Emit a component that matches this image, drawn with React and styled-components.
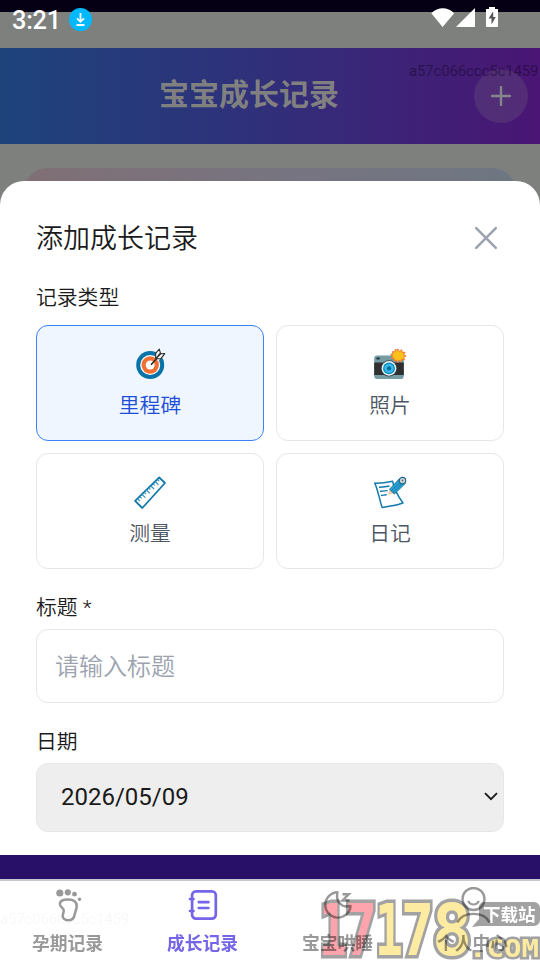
import React from "react";
import styled, { createGlobalStyle } from "styled-components";

const GlobalStyle = createGlobalStyle`
  * {
    box-sizing: border-box;
  }
  body {
    margin: 0;
    font-family: Roboto, "Noto Sans CJK SC", sans-serif;
    color: #1a1a1a;
  }
  button {
    font: inherit;
    color: inherit;
    border: none;
    background: none;
    padding: 0;
  }
`;

const Screen = styled.div`
  position: relative;
  width: 540px;
  height: 960px;
  overflow: hidden;
  display: flex;
  flex-direction: column;
  background: #7e807e;
`;

const TopStrip = styled.div`
  height: 12px;
  margin-bottom: 36px;
  background: #050014;
`;

const StatusBar = styled.div`
  position: absolute;
  top: 0;
  left: 0;
  width: 100%;
  height: 38px;
  padding: 0 42px 0 12px;
  display: flex;
  align-items: center;
  color: #fff;
  svg {
    display: block;
  }
`;

const Clock = styled.span`
  font-size: 25.4px;
  font-weight: 500;
  line-height: 38px;
  width: 57px;
  padding-top: 2px;
  letter-spacing: -0.3px;
`;

const StatusIcons = styled.div`
  margin-left: auto;
  margin-bottom: 3px;
`;

const Header = styled.header`
  position: relative;
  height: 96px;
  flex: none;
  display: flex;
  align-items: center;
  justify-content: flex-end;
  padding-right: 12px;
  background: linear-gradient(90deg, #1d437b 0%, #30307a 48%, #4a1574 100%);
`;

const PageTitle = styled.h1`
  flex: 1;
  margin: 0 0 2px;
  padding-left: 24px;
  text-align: center;
  font-size: 30px;
  line-height: 44px;
  font-weight: 700;
  color: #808080;
`;

const AddButton = styled.button`
  width: 54px;
  height: 54px;
  border-radius: 50%;
  display: grid;
  place-items: center;
  background: rgba(128, 128, 128, 0.2);
`;

const DeviceId = styled.span`
  position: absolute;
  top: ${({ top }) => top};
  left: ${({ left }) => left};
  font-size: 15px;
  line-height: 18px;
  letter-spacing: -0.15px;
  color: ${({ color }) => color};
`;

const PeekCard = styled.div`
  height: 60px;
  flex: none;
  margin: 24px 24px 0;
  border-radius: 24px;
  background: linear-gradient(90deg, #806f75, #777480 50%, #6e7682);
`;

const Sheet = styled.section`
  position: absolute;
  top: 181px;
  left: 0;
  width: 100%;
  height: 674px;
  padding: 36px 36px 0;
  border-radius: 24px 24px 0 0;
  background: #fff;
`;

const SheetHeader = styled.div`
  height: 42px;
  display: flex;
  align-items: center;
  justify-content: space-between;
  padding-right: 6px;
  margin-bottom: 23px;
  h2 {
    margin: 0;
    padding-top: 2px;
    font-size: 27px;
    line-height: 42px;
    font-weight: 350;
  }
  svg {
    display: block;
  }
`;

const Label = styled.div`
  font-size: 20.8px;
  font-weight: 350;
  line-height: 30px;
  padding-top: ${({ $shift }) => $shift || "2px"};
  height: 30px;
  margin-bottom: ${({ $gap }) => $gap || "8px"};
`;

const TypeGrid = styled.div`
  display: grid;
  grid-template-columns: 1fr 1fr;
  gap: 12px;
  margin-bottom: 22px;
`;

const TypeCard = styled.button`
  height: 116px;
  display: flex;
  flex-direction: column;
  align-items: center;
  padding-top: 22px;
  border-radius: 12px;
  border: 1px solid ${({ $active }) => ($active ? "#3b82f6" : "#e5e7eb")};
  background: ${({ $active }) => ($active ? "#eff6ff" : "#fff")};
  color: ${({ $active }) => ($active ? "#1d4ed8" : "#4b5563")};
  font-size: 20.8px;
  font-weight: 350;
  line-height: 30px;
  svg {
    display: block;
    margin-bottom: 11px;
    overflow: visible;
  }
`;

const TitleInput = styled.input`
  display: block;
  width: 100%;
  height: 74px;
  padding: 1px 18px 0;
  margin-bottom: 22px;
  border: 1px solid #e5e7eb;
  border-radius: 12px;
  font-family: inherit;
  font-size: 24px;
  font-weight: 350;
  &::placeholder {
    color: #9ca3af;
  }
`;

const DateField = styled.div`
  height: 69px;
  display: flex;
  align-items: center;
  justify-content: space-between;
  padding: 0 5px 2px 24px;
  border: 1px solid #e5e7eb;
  border-radius: 12px;
  background: #eee;
  font-size: 24px;
`;

const Footer = styled.footer`
  margin-top: auto;
  height: 105px;
  flex: none;
  padding-top: 24px;
  background: #280f68;
`;

const TabBar = styled.nav`
  position: relative;
  height: 81px;
  display: grid;
  grid-template-columns: repeat(4, 1fr);
  border-top: 2px solid #c9c7ce;
  background: #fff;
  isolation: isolate;
`;

const Tab = styled.button`
  display: flex;
  flex-direction: column;
  align-items: center;
  padding-top: 6px;
  font-size: 17.8px;
  line-height: 26px;
  font-weight: 700;
  color: ${({ $active }) => ($active ? "#7565e8" : "#999")};
  svg {
    display: block;
    margin-bottom: 8px;
  }
`;

const SiteMark = styled.div`
  position: absolute;
  left: 316px;
  top: 0;
  width: 224px;
  height: 79px;
  mix-blend-mode: multiply;
  svg {
    display: block;
  }
`;

const DownloadIcon = () => (
  <svg width="23" height="23" viewBox="0 0 23 23">
    <circle cx="11.5" cy="11.5" r="11.5" fill="#00b8fd" />
    <path d="M11.5 5v8M8 10.3l3.5 3.5 3.5-3.5M7.5 17h8" fill="none" stroke="#fff" strokeWidth="1.8" />
  </svg>
);

const SignalIcons = () => (
  <svg width="68" height="22" viewBox="0 0 68 22" fill="#fff">
    <path d="M1.3 6.2C8-.4 17.5-.4 24.2 6.2L12.6 20z" />
    <path d="M45 1v19H26z" />
    <path d="M56 2h3V0h6v2h3v17.2a.8.8 0 0 1-.8.8H56.8a.8.8 0 0 1-.8-.8z" />
    <path d="M63.2 4.2L58.6 11.5h2.9v6l4.3-7.6h-2.6z" fill="#555" />
  </svg>
);

const PlusIcon = () => (
  <svg width="20" height="20" viewBox="0 0 20 20">
    <path d="M10 1v18M1 10h18" stroke="#86858a" strokeWidth="2.4" strokeLinecap="round" />
  </svg>
);

const CloseIcon = () => (
  <svg width="24" height="24" viewBox="0 0 24 24">
    <path d="M2.2 2.2l19.6 19.6M21.8 2.2L2.2 21.8" stroke="#9ca3af" strokeWidth="2.6" strokeLinecap="round" />
  </svg>
);

const TargetIcon = () => (
  <svg width="32" height="32" viewBox="0 0 32 32">
    <circle cx="16.2" cy="17" r="14" fill="#0873a8" />
    <circle cx="16.2" cy="17" r="10" fill="#fff" />
    <circle cx="16.2" cy="17" r="8.7" fill="#f06f32" />
    <circle cx="16.2" cy="17" r="4.5" fill="#fff" />
    <path d="M21 9.5L26.5 4l3 4-5.2 5z" fill="#eff6ff" />
    <path d="M17 16.8L27.5 5.2" stroke="#252525" strokeWidth="1.5" />
    <path
      d="M21.6 10.7l.2-5.5 3.5-4 1.1 3.7-4.5 5.8M22.5 10.8l4.3-.2 4-5-3.8.1-5 5"
      fill="#fff"
      stroke="#303030"
      strokeWidth="1.1"
      strokeLinejoin="round"
    />
  </svg>
);

const CameraIcon = () => (
  <svg width="32" height="32" viewBox="0 0 32 32">
    <rect x="17" y="5" width="11" height="8" rx="2" fill="#7fa1a8" />
    <rect x="0.2" y="7.5" width="29.6" height="23.5" rx="3" fill="#759ba3" />
    <rect x="0.2" y="14.5" width="29.6" height="12.5" fill="#303030" />
    <rect x="2.3" y="9.6" width="3.6" height="2" rx="1" fill="#263238" />
    <circle cx="15" cy="20.4" r="8.1" fill="#37474f" />
    <circle cx="15" cy="20.4" r="7.3" fill="#f0f4f5" />
    <circle cx="15" cy="20.4" r="5.9" fill="#0288b8" />
    <circle cx="15" cy="20.4" r="4.7" fill="#39b8ea" />
    <circle cx="15" cy="20.4" r="2.1" fill="#01689b" />
    <path
      d="M23.9.9l1.5 2.6 2.4-1.8.3 2.8 3-.3-1.4 2.6 2.4 1.2-2.5 1.2.9 2.4-2.8-.3-.3 2.6-2.2-1.6-1.5 2.3-1.2-2.6-2.4 1.2.1-2.8-2.6.1 1.2-2.4-2.1-1.5 2.5-.8-.8-2.2 2.6.3.3-2.8 2 1.6z"
      fill="#fcc21b"
      stroke="#f37a35"
      strokeWidth="1"
    />
  </svg>
);

const RulerIcon = () => (
  <svg width="32" height="32" viewBox="0 0 32 32">
    <path
      d="M25.2 1.5L31 7 8.3 32 1.1 24.8z"
      fill="#fff"
      stroke="#1279ad"
      strokeWidth="1.8"
      strokeLinejoin="round"
    />
    <path
      d="M3.5 22.7l2.5 2.4M5.7 20.5l1.9 1.9M7.9 18.3l3.4 3.3M10.1 16.2l1.9 1.9M12.3 14l3.4 3.3M14.5 11.8l1.9 1.9M16.7 9.7l3.4 3.3M18.9 7.5l1.9 1.9M21.1 5.4l3.4 3.3M23.3 3.3l1.9 1.9"
      stroke="#3a92bd"
      strokeWidth="1.2"
    />
  </svg>
);

const NoteIcon = () => (
  <svg width="32" height="32" viewBox="0 0 32 32">
    <path
      d="M.8 7.1c6 .2 12-.7 17.8-1.9C20 13 24.5 21 29 27c-6 2.5-13 3-20.8 4.6C5.5 24 4 14 .8 7.1z"
      fill="#fff"
      stroke="#1279ad"
      strokeWidth="1.5"
      strokeLinejoin="round"
    />
    <path d="M5 11.2c4 .1 7-.7 10.6-1.2M6 15.2c3 .3 5-.7 7.6-.6M7 19.4c2 0 4-.7 5.7-.6" fill="none" stroke="#1279ad" strokeWidth="1.4" />
    <path d="M14.2 18.8l1-5.6 4.6 4.6z" fill="#f7c9a8" />
    <path d="M15.6 13.2L26 2.2l5.4 5-11 10.8z" fill="#29a3d6" stroke="#126b99" strokeWidth="1" />
    <path d="M17.4 14.8L28 4.4M19 16.4L29.6 6" stroke="#126b99" strokeWidth="0.8" />
    <circle cx="28.5" cy="4.6" r="3.2" fill="#cbd8dc" stroke="#1c6389" strokeWidth="1.1" />
    <circle cx="28.5" cy="4.6" r="1" fill="#7d6864" />
  </svg>
);

const ChevronIcon = () => (
  <svg width="14" height="9" viewBox="0 0 14 9">
    <path d="M1 1.2l6 6 6-6" fill="none" stroke="#1c1c1c" strokeWidth="1.9" />
  </svg>
);

const FootIcon = () => (
  <svg width="36" height="36" viewBox="0 0 36 36" fill="currentColor">
    <circle cx="9.8" cy="6" r="3.6" />
    <circle cx="17.8" cy="5.3" r="3.1" />
    <circle cx="24.5" cy="7.2" r="2.4" />
    <circle cx="29.5" cy="12.2" r="1.7" />
    <path
      d="M10 17.5C9.5 14 13 12.4 18 12.5c5 0 8.7 1.5 8.7 6.5 0 4-1.7 6-2.2 9-.6 4-3.5 5.3-6.3 5.3-3.6 0-6.3-2.4-5.4-5.6.7-2.5 1.5-3.2.7-5.2-.9-2-3-2.2-3.5-5z"
      fill="none"
      stroke="currentColor"
      strokeWidth="2.5"
    />
  </svg>
);

const BookIcon = () => (
  <svg width="36" height="36" viewBox="0 0 36 36" fill="none" stroke="currentColor" strokeWidth="2.7">
    <rect x="7.1" y="4.3" width="23.7" height="27.3" rx="3.8" />
    <path d="M13.8 15.2h9.6M13.8 21h9.6M5 12h3.5M5 24h3.5" strokeLinecap="round" />
  </svg>
);

const MoonIcon = () => (
  <svg width="36" height="36" viewBox="0 0 36 36" fill="none" stroke="currentColor" strokeWidth="2.4">
    <path d="M17.5 5.2A12.7 12.7 0 1 0 30.6 19c-4.3 1-8.3.3-11-2.8-2.7-3-3-7-2.1-11z" strokeLinejoin="round" />
    <path d="M22.5 7.2h6.3l-6.3 6.3h7" />
  </svg>
);

const PersonIcon = () => (
  <svg width="36" height="36" viewBox="0 0 36 36" fill="none" stroke="currentColor" strokeWidth="2.4">
    <circle cx="18.5" cy="12" r="11" />
    <path d="M13 14c2.5 4.6 8.5 4.6 11 0" strokeWidth="2" />
    <path d="M2.2 35.5C8 24 29 24 34.6 35.5" />
  </svg>
);

const recordTypes = [
  { name: "里程碑", Icon: TargetIcon },
  { name: "照片", Icon: CameraIcon },
  { name: "测量", Icon: RulerIcon },
  { name: "日记", Icon: NoteIcon },
];

const tabs = [
  { name: "孕期记录", Icon: FootIcon },
  { name: "成长记录", Icon: BookIcon },
  { name: "宝宝哄睡", Icon: MoonIcon },
  { name: "个人中心", Icon: PersonIcon },
];

const digits = [
  { char: "1", x: 3, width: 28, fill: "#fda4ac" },
  { char: "7", x: 29, width: 32, fill: "#fda4ac" },
  { char: "1", x: 59, width: 28, fill: "#fdeba2" },
  { char: "7", x: 85, width: 33, fill: "#fdeba2" },
  { char: "8", x: 116, width: 40, fill: "#fdeba2" },
];

const SiteLogo = () => (
  <SiteMark>
    <svg
      width="224"
      height="79"
      viewBox="0 0 224 79"
      fontFamily="DejaVu Sans Mono, monospace"
      fontWeight="700"
      stroke="#a3a2a2"
      strokeWidth="7"
      paintOrder="stroke"
    >
      {digits.map(({ char, x, width, fill }) => (
        <text
          key={x}
          x={x}
          y="74"
          fontSize="71"
          fill={fill}
          textLength={width}
          lengthAdjust="spacingAndGlyphs"
        >
          {char}
        </text>
      ))}
      <text x="153" y="76" fontSize="25" strokeWidth="5" fill="#fdeba2" textLength="70" lengthAdjust="spacingAndGlyphs">
        .COM
      </text>
      <path d="M168 21h50a6 6 0 0 1 6 6v12a6 6 0 0 1-6 6h-54l-8 1 7-8V26a5 5 0 0 1 5-5z" fill="#a2a2a2" stroke="none" />
      <text x="167" y="40" fontSize="17.5" fill="#fff" stroke="none" fontFamily="Noto Sans CJK SC, sans-serif">
        下载站
      </text>
    </svg>
  </SiteMark>
);

const App = () => {
  return (
    <>
      <GlobalStyle />
      <Screen>
        <TopStrip />
        <Header>
          <PageTitle>宝宝成长记录</PageTitle>
          <AddButton>
            <PlusIcon />
          </AddButton>
          <DeviceId top="14px" left="409px" color="rgba(20, 5, 40, 0.5)">
            a57c066ccc5c1459
          </DeviceId>
        </Header>
        <PeekCard />
        <Footer>
          <TabBar>
            {tabs.map(({ name, Icon }) => (
              <Tab key={name} $active={name === "成长记录"}>
                <Icon />
                {name}
              </Tab>
            ))}
            <DeviceId top="29px" left="0" color="rgba(0, 0, 0, 0.03)">
              a57c066ccc5c1459
            </DeviceId>
            <SiteLogo />
          </TabBar>
        </Footer>
        <Sheet>
          <SheetHeader>
            <h2>添加成长记录</h2>
            <button>
              <CloseIcon />
            </button>
          </SheetHeader>
          <Label $gap="13px" $shift="1px">
            记录类型
          </Label>
          <TypeGrid>
            {recordTypes.map(({ name, Icon }) => (
              <TypeCard key={name} $active={name === "里程碑"}>
                <Icon />
                {name}
              </TypeCard>
            ))}
          </TypeGrid>
          <Label>标题 *</Label>
          <TitleInput placeholder="请输入标题" />
          <Label>日期</Label>
          <DateField>
            2026/05/09
            <ChevronIcon />
          </DateField>
        </Sheet>
        <StatusBar>
          <Clock>3:21</Clock>
          <DownloadIcon />
          <StatusIcons>
            <SignalIcons />
          </StatusIcons>
        </StatusBar>
      </Screen>
    </>
  );
};

export default App;
